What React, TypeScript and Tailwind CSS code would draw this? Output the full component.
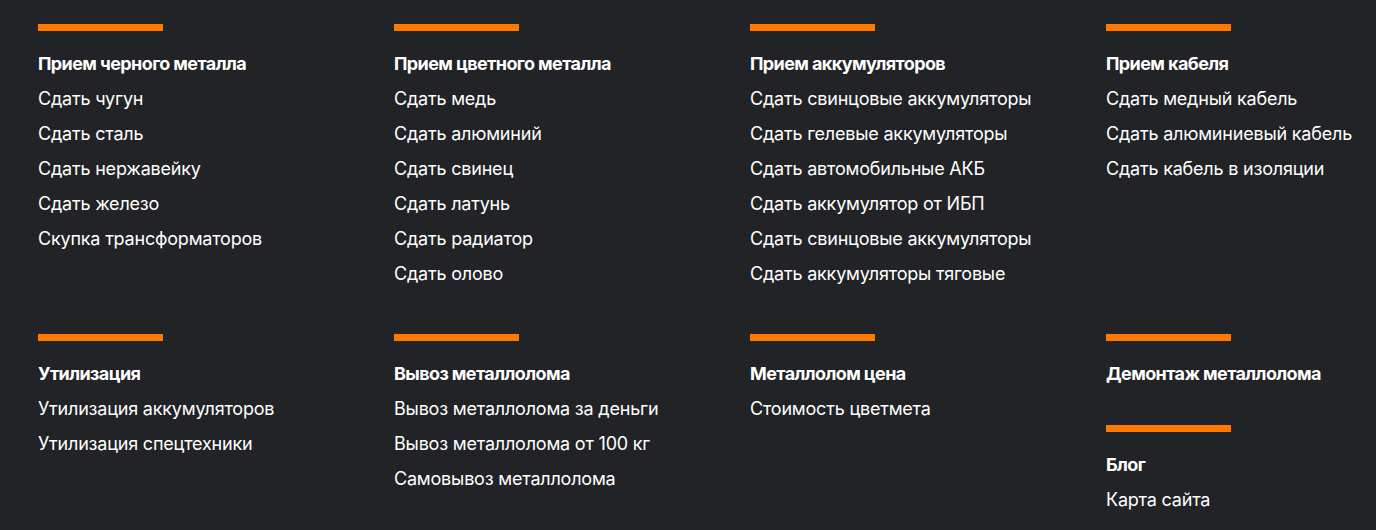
const rows: { title: string; links: string[] }[][] = [
  [
    {
      title: "Прием черного металла",
      links: ["Сдать чугун", "Сдать сталь", "Сдать нержавейку", "Сдать железо", "Скупка трансформаторов"],
    },
    {
      title: "Прием цветного металла",
      links: ["Сдать медь", "Сдать алюминий", "Сдать свинец", "Сдать латунь", "Сдать радиатор", "Сдать олово"],
    },
    {
      title: "Прием аккумуляторов",
      links: [
        "Сдать свинцовые аккумуляторы",
        "Сдать гелевые аккумуляторы",
        "Сдать автомобильные АКБ",
        "Сдать аккумулятор от ИБП",
        "Сдать свинцовые аккумуляторы",
        "Сдать аккумуляторы тяговые",
      ],
    },
    {
      title: "Прием кабеля",
      links: ["Сдать медный кабель", "Сдать алюминиевый кабель", "Сдать кабель в изоляции"],
    },
  ],
];

function Section({ title, links }: { title: string; links: string[] }) {
  return (
    <div className="flex flex-col">
      <div className="h-[7px] w-[125px] bg-[#ff7800]" />
      <div className="mt-[15px] text-[18px] font-bold leading-[35px] tracking-[-0.6px] text-white">{title}</div>
      {links.map((l, i) => (
        <a key={i} className="text-[18px] leading-[35px] tracking-[-0.2px] text-white">
          {l}
        </a>
      ))}
    </div>
  );
}

export default function App() {
  return (
    <div
      className="h-[530px] w-full overflow-hidden bg-[#212326] pl-[38px] pt-6"
      style={{ fontFamily: "Inter, 'Noto Sans', sans-serif" }}
    >
      <div className="grid grid-cols-[356px_356px_356px_1fr]">
        {rows[0].map((s) => (
          <Section key={s.title} {...s} />
        ))}
      </div>
      <div className="mt-[43px] grid grid-cols-[356px_356px_356px_1fr]">
        <Section title="Утилизация" links={["Утилизация аккумуляторов", "Утилизация спецтехники"]} />
        <Section
          title="Вывоз металлолома"
          links={["Вывоз металлолома за деньги", "Вывоз металлолома от 100 кг", "Самовывоз металлолома"]}
        />
        <Section title="Металлолом цена" links={["Стоимость цветмета"]} />
        <div className="flex flex-col gap-[34px]">
          <Section title="Демонтаж металлолома" links={[]} />
          <Section title="Блог" links={["Карта сайта"]} />
        </div>
      </div>
    </div>
  );
}
